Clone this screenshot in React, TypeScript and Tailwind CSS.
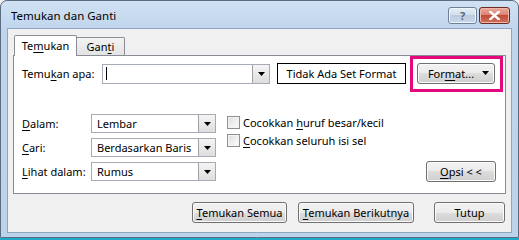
import React from "react";

function U({ c }: { c: string }) {
  return <span className="underline underline-offset-[2px] decoration-[1px]">{c}</span>;
}

function Tri() {
  return (
    <svg width="7" height="4" viewBox="0 0 7 4" className="block">
      <path d="M0 0h7L3.5 4z" fill="#000" />
    </svg>
  );
}

function ArrowBox() {
  return (
    <div className="w-[17px] h-full border-l border-[#a0a0a0] bg-[linear-gradient(to_bottom,#f4f4f4,#dedede)] flex items-center justify-center">
      <Tri />
    </div>
  );
}

const btn =
  "flex items-center justify-center whitespace-nowrap h-[21px] rounded-[3px] border border-[#707070] bg-[linear-gradient(to_bottom,#f2f2f2_0%,#ebebeb_50%,#dddddd_50%,#cfcfcf_100%)] shadow-[inset_0_0_0_1px_#fbfbfb] text-black";

export default function App() {
  return (
    <div className="w-[519px] h-[240px] bg-[#f0f0f0] font-['Noto_Sans',sans-serif] text-[11px] text-black leading-none whitespace-nowrap">
      <div className="w-[519px] h-[238px] border border-[#5b6d80] rounded-t-[7px] bg-[linear-gradient(to_bottom,#d0e1f3,#bfd5ec_30px,#bcd3eb)] flex flex-col">
        {/* title bar */}
        <div className="h-[27px] flex items-center justify-between pl-[10px] pr-[8px]">
          <span className="text-[11.5px] text-black mt-[2px]">Temukan dan Ganti</span>
          <div className="flex items-center gap-[2px] mt-[1px]">
            <div className="w-[29px] h-[17px] rounded-[3px] border border-[#6f8196] bg-[linear-gradient(to_bottom,#e4ecf6_0%,#d2deec_50%,#bccbde_50%,#c8d7ea_100%)] shadow-[inset_0_0_0_1px_#eef4fb] flex items-center justify-center">
              <span className="text-[11px] font-bold text-[#55667c] leading-none">?</span>
            </div>
            <div className="w-[31px] h-[17px] rounded-[3px] border border-[#6b2a22] bg-[linear-gradient(to_bottom,#e9a99c_0%,#d98372_50%,#c24a37_50%,#d0735f_100%)] shadow-[inset_0_0_0_1px_#eeb7aa] flex items-center justify-center">
              <svg width="11" height="9" viewBox="0 0 11 9">
                <path d="M1 0.5 L10 8.5 M10 0.5 L1 8.5" stroke="#fff" strokeWidth="2.4" strokeLinecap="square" />
              </svg>
            </div>
          </div>
        </div>
        {/* client */}
        <div className="mx-[6px] h-[205px] border border-[#8ea6c0] bg-[#f0f0f0] flex flex-col pt-[6px] pl-[5px] pr-[5px]">
          {/* tabs */}
          <div className="flex items-end h-[21px] pl-[1px] relative z-10">
            <div className="h-[21px] w-[63px] border border-b-0 border-[#898c95] bg-white rounded-t-[2px] flex items-center justify-center pb-[1px]">
              <span>
                Te<U c="m" />ukan
              </span>
            </div>
            <div className="h-[18px] w-[48px] border border-l-0 border-b-0 border-[#898c95] bg-[linear-gradient(to_bottom,#f3f3f3,#e3e3e3)] rounded-tr-[2px] flex items-center justify-center mb-[1px]">
              <span>
                Gan<U c="t" />i
              </span>
            </div>
          </div>
          {/* panel */}
          <div className="relative -mt-[1px] w-[493px] h-[139px] border border-[#898c95] bg-white flex flex-col pt-[7px] pl-[8px] pr-[9px]">
            {/* row 1 */}
            <div className="flex items-center h-[21px]">
              <div className="w-[80px]">
                <span>
                  Temu<U c="k" />an apa:
                </span>
              </div>
              <div className="w-[168px] h-[20px] border border-[#a5acb5] flex bg-white">
                <div className="flex-1 flex items-center pl-[3px]">
                  <div className="w-[1px] h-[13px] bg-black" />
                </div>
                <ArrowBox />
              </div>
              <div className="ml-[7px] w-[129px] h-[21px] border border-black bg-white flex items-center justify-center">
                Tidak Ada Set Format
              </div>
              <div className={btn + " ml-[11px] w-[78px] h-[18px] relative"}>
                <span className="mr-[10px]">
                  For<U c="m" />at...
                </span>
                <div className="absolute right-[5px] top-[7px]">
                  <Tri />
                </div>
              </div>
            </div>
            {/* pink highlight */}
            <div className="absolute left-[396px] top-0 w-[93px] h-[36px] border-[3px] border-[#e4087e]" />
            {/* lower section */}
            <div className="flex mt-[30px]">
              <div className="flex flex-col gap-[5px]">
                {[
                  { l: <><U c="D" />alam:</>, v: "Lembar" },
                  { l: <><U c="C" />ari:</>, v: "Berdasarkan Baris" },
                  { l: <><U c="L" />ihat dalam:</>, v: "Rumus" },
                ].map((r, i) => (
                  <div key={i} className="flex items-center h-[19px]">
                    <div className="w-[69px]">
                      <span>{r.l}</span>
                    </div>
                    <div className="w-[125px] h-[19px] border border-[#a5acb5] bg-white flex">
                      <div className="flex-1 flex items-center pl-[5px]">{r.v}</div>
                      <ArrowBox />
                    </div>
                  </div>
                ))}
              </div>
              <div className="flex flex-col gap-[5px] ml-[11px] pt-[2px]">
                <label className="flex items-center gap-[3px] h-[13px]">
                  <div className="w-[13px] h-[13px] border border-[#8f8f8f] bg-[linear-gradient(135deg,#dcdcdc,#ffffff)] shadow-[inset_0_0_0_1px_#f4f4f4]" />
                  <span>
                    Cocokkan <U c="h" />uruf besar/kecil
                  </span>
                </label>
                <label className="flex items-center gap-[3px] h-[13px]">
                  <div className="w-[13px] h-[13px] border border-[#8f8f8f] bg-[linear-gradient(135deg,#dcdcdc,#ffffff)] shadow-[inset_0_0_0_1px_#f4f4f4]" />
                  <span>
                    <U c="C" />ocokkan seluruh isi sel
                  </span>
                </label>
              </div>
              <div className="flex-1 flex items-end justify-end">
                <div className={btn + " w-[70px] h-[20px] mb-[-1px]"}>
                  <span>
                    <U c="O" />psi &lt; &lt;
                  </span>
                </div>
              </div>
            </div>
          </div>
          {/* bottom buttons */}
          <div className="flex mt-[8px] pl-[179px]">
            <div className={btn + " w-[95px]"}>
              <span>
                <U c="T" />emukan Semua
              </span>
            </div>
            <div className={btn + " w-[116px] ml-[11px] border-[#3c8fd0] shadow-[inset_0_0_0_1px_#9fdcf7]"}>
              <span>
                <U c="T" />emukan Berikutnya
              </span>
            </div>
            <div className={btn + " w-[71px] ml-[20px]"}>
              <span>Tutup</span>
            </div>
          </div>
        </div>
      </div>
      <div className="h-[2px] bg-[#22a8c8]" />
    </div>
  );
}
